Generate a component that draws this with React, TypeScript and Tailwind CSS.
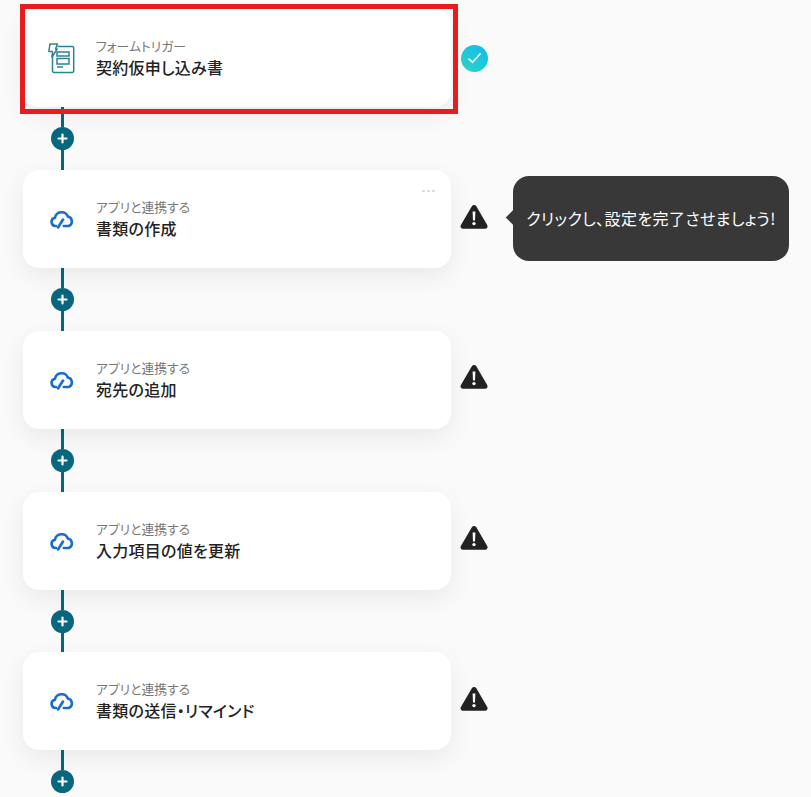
import React from "react";

const steps = [
  { label: "アプリと連携する", title: "書類の作成", menu: true, tip: true },
  { label: "アプリと連携する", title: "宛先の追加" },
  { label: "アプリと連携する", title: "入力項目の値を更新" },
  { label: "アプリと連携する", title: "書類の送信・リマインド" },
];

const FormIcon = () => (
  <svg width="28" height="31" viewBox="0 0 28 31" fill="none" stroke="#2f8196" strokeWidth="1.5">
    <path d="M9.5 3.5h14.7a1.5 1.5 0 0 1 1.5 1.5v23a1.5 1.5 0 0 1-1.5 1.5H6a1.5 1.5 0 0 1-1.5-1.5V12" />
    <path d="M2 1h7.5L7.5 6H9.2L4 14l.5-5.5H.8z" strokeLinejoin="round" />
    <rect x="9" y="9" width="12" height="4" />
    <rect x="9" y="15.5" width="12" height="5.5" />
    <path d="M9 24h6" />
  </svg>
);

const CloudIcon = () => (
  <svg width="24" height="20" viewBox="0 0 24 20" fill="none" stroke="#1a6dd0" strokeWidth="2.6" strokeLinecap="round">
    <path d="M6 17H5.5a4.2 4.2 0 0 1-.6-8.3 6.8 6.8 0 0 1 13-1.2 5 5 0 0 1 .9 9.5h-5" />
    <path d="M8 18.5l5-8" />
  </svg>
);

const Warning = () => (
  <svg width="28" height="25" viewBox="0 0 28 25">
    <path d="M12 2a2.6 2.6 0 0 1 4.2 0l11 19a2.5 2.5 0 0 1-2.1 3.8H3a2.5 2.5 0 0 1-2.1-3.8z" fill="#222222" />
    <path d="M12.6 7.5h2.8l-.4 9h-2z" fill="#ffffff" />
    <circle cx="14" cy="19.6" r="1.7" fill="#ffffff" />
  </svg>
);

const Check = () => (
  <div className="flex h-[27px] w-[27px] items-center justify-center rounded-full bg-gradient-to-tr from-[#2fd6c3] to-[#12b9ee]">
    <svg width="15" height="12" viewBox="0 0 15 12" fill="none" stroke="#ffffff" strokeWidth="1.6">
      <path d="M1.5 6.5l4 3.8 8-8.8" />
    </svg>
  </div>
);

const Connector = ({ last }: { last?: boolean }) => (
  <div className="flex h-[62.75px] w-[78px] flex-col items-center">
    <div className="h-[20px] w-[3px] bg-[#07677f]" />
    <div className="flex h-[23px] w-[23px] shrink-0 items-center justify-center rounded-full bg-[#07677f]">
      <svg width="11" height="11" viewBox="0 0 11 11" stroke="#ffffff" strokeWidth="2.2" strokeLinecap="round">
        <path d="M5.5 1.5v8M1.5 5.5h8" />
      </svg>
    </div>
    {!last && <div className="w-[3px] flex-1 bg-[#07677f]" />}
  </div>
);

const Card = ({
  icon,
  label,
  title,
  menu,
}: {
  icon: React.ReactNode;
  label: string;
  title: string;
  menu?: boolean;
}) => (
  <div className="relative flex h-[98px] w-[428px] shrink-0 items-center rounded-[16px] bg-white shadow-[0_8px_24px_rgba(0,0,0,0.07)]">
    <div className="flex w-[73px] shrink-0 justify-center pl-[5px]">{icon}</div>
    <div className="flex flex-col">
      <span className="text-[12.8px] leading-[18px] text-[#777777]">{label}</span>
      <span className="text-[16px] leading-[24px] font-medium tracking-[0.25px] text-[#222222]">{title}</span>
    </div>
    {menu && (
      <div className="absolute top-[20px] right-[16px] flex gap-[2px]">
        <span className="h-[2px] w-[3px] bg-[#dddddd]" />
        <span className="h-[2px] w-[3px] bg-[#dddddd]" />
        <span className="h-[2px] w-[3px] bg-[#dddddd]" />
      </div>
    )}
  </div>
);

export default function App() {
  return (
    <div className="h-[797px] w-[811px] overflow-hidden bg-[#fafafa] pt-[9.25px] pl-[23px] font-['Noto_Sans_CJK_JP','Noto_Sans',sans-serif] [font-feature-settings:'palt']">
      <div className="flex items-center gap-[10px]">
        <div className="relative">
          <Card icon={<FormIcon />} label="フォームトリガー" title="契約仮申し込み書" />
          <div className="absolute -top-[5px] -right-[7px] -bottom-[7px] -left-[3px] border-[5px] border-[#e81c1f]" />
        </div>
        <Check />
      </div>
      <Connector />
      {steps.map((s, i) => (
        <div key={s.title}>
          <div className="flex items-center gap-[9px]">
            <Card icon={<CloudIcon />} label={s.label} title={s.title} menu={s.menu} />
            <div className="relative -mt-[6px]">
              <Warning />
              {s.tip && (
                <div className="absolute top-[-28px] left-[53px] flex h-[85px] w-[276px] items-center justify-center rounded-[16px] bg-[#383838] text-[16px] tracking-[0.4px] whitespace-nowrap text-white">
                  <span className="absolute top-[36px] -left-[5px] h-[11px] w-[11px] rotate-45 bg-[#383838]" />
                  クリックし、設定を完了させましょう!
                </div>
              )}
            </div>
          </div>
          <Connector last={i === steps.length - 1} />
        </div>
      ))}
    </div>
  );
}
